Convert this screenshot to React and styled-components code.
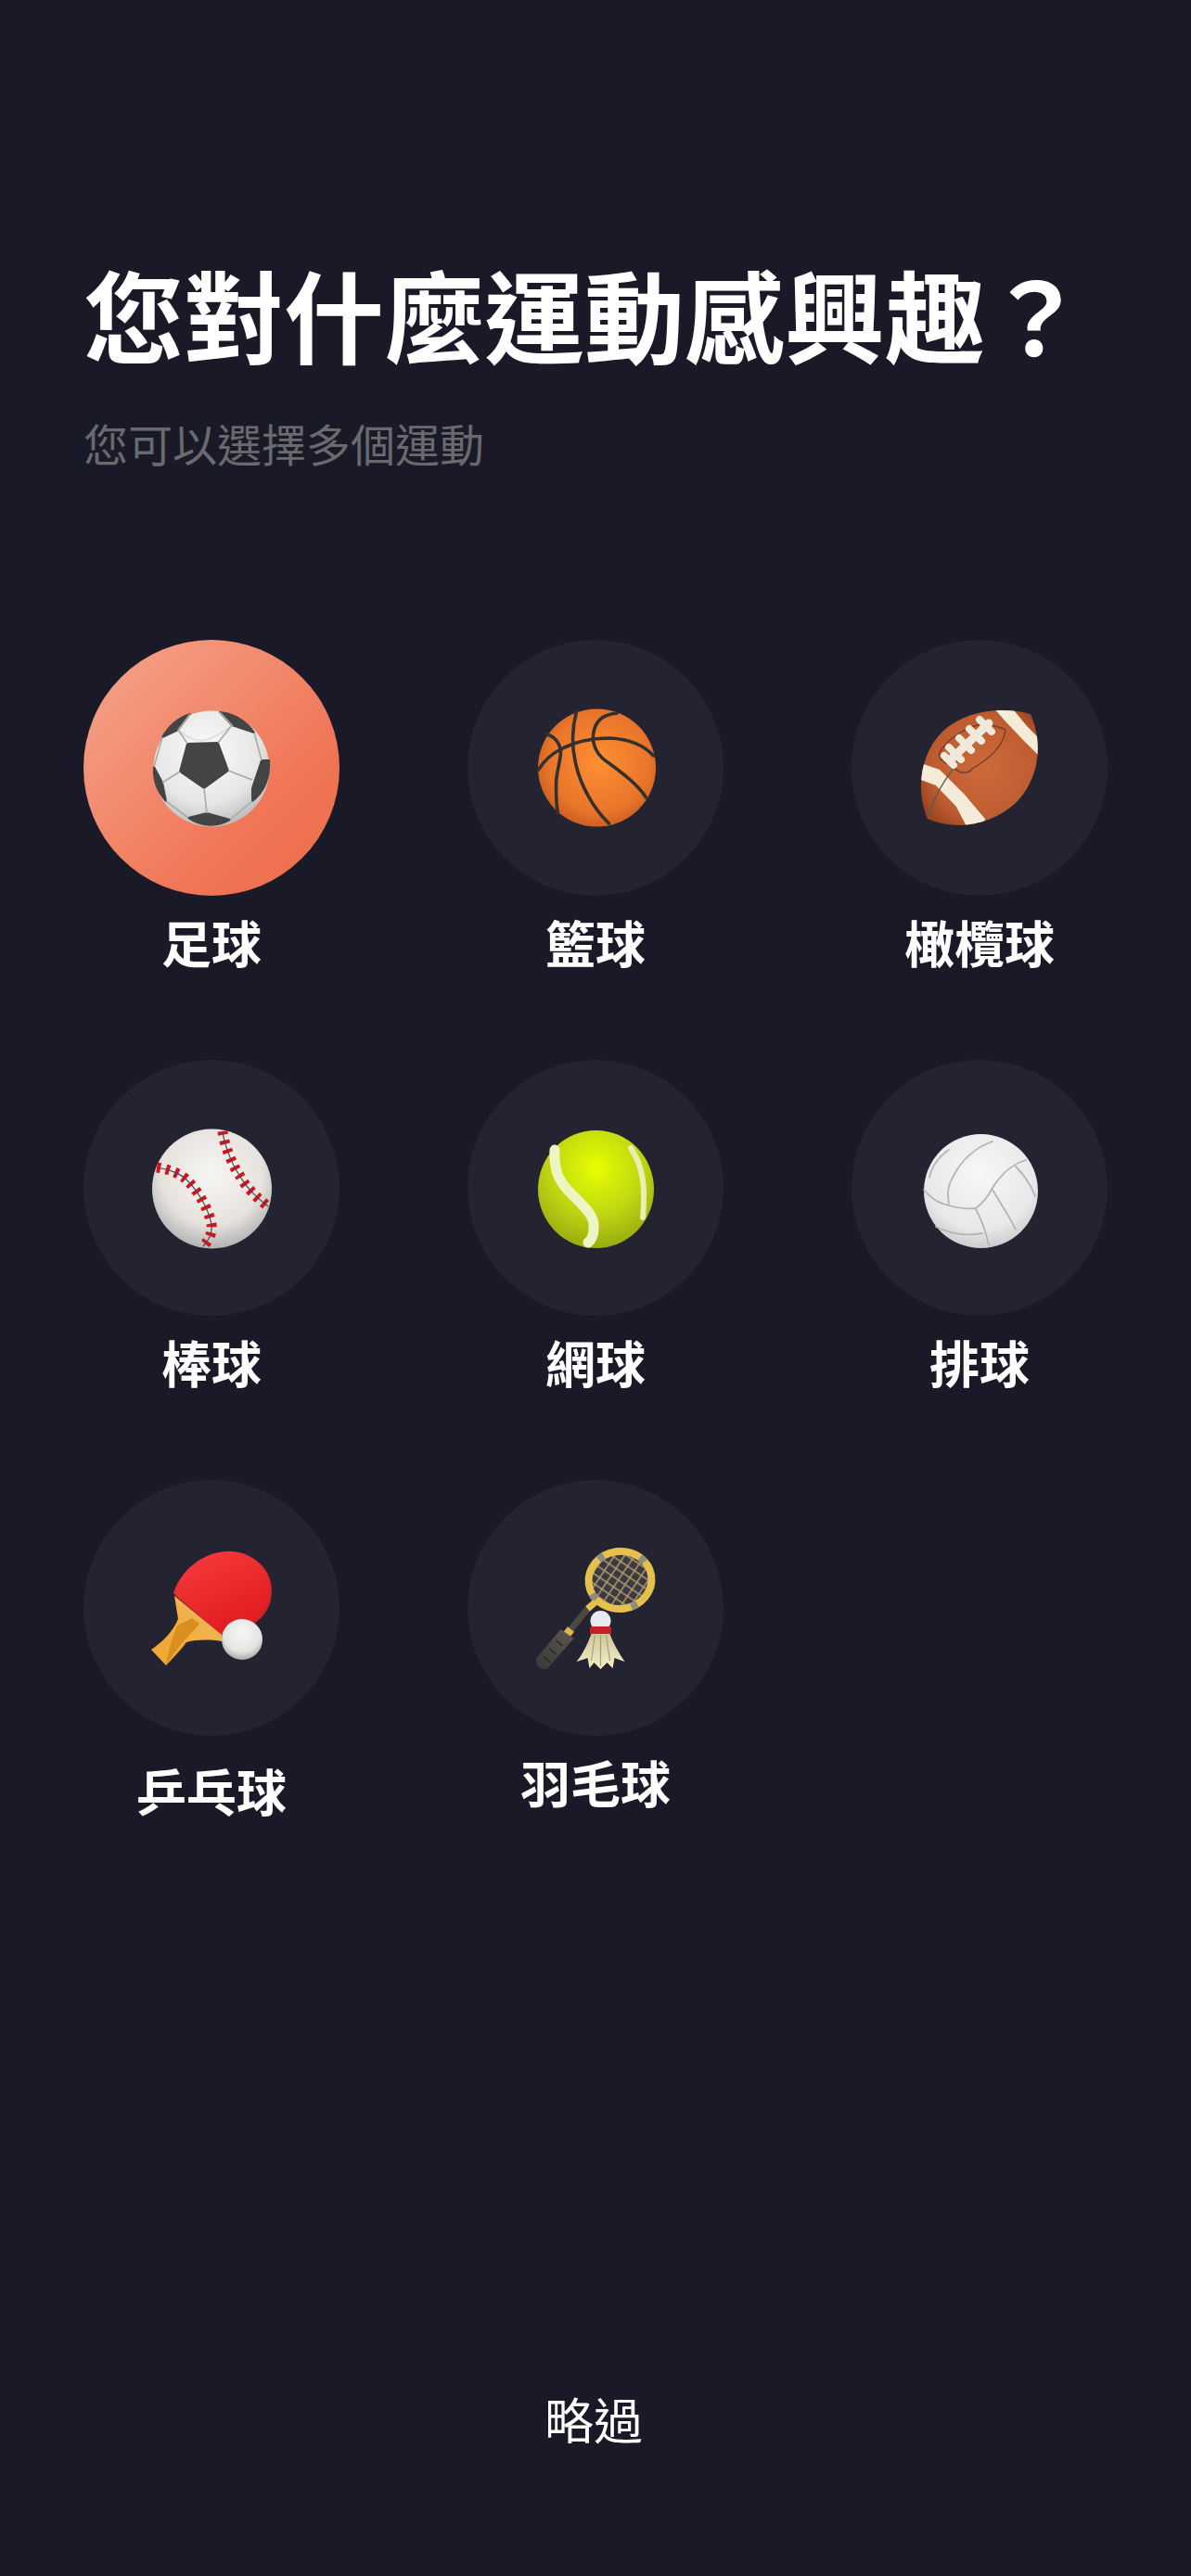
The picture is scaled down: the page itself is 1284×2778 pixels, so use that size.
import React from "react";
import styled, { createGlobalStyle } from "styled-components";

const Global = createGlobalStyle`
  html, body { margin: 0; padding: 0; background: #191928; }
`;

const Page = styled.main`
  box-sizing: border-box;
  width: 1284px;
  height: 2778px;
  padding: 275px 90px 0;
  display: flex;
  flex-direction: column;
  background: #191928;
  color: #fff;
  font-family: "Noto Sans CJK TC", "Noto Sans CJK SC", sans-serif;
`;

const Title = styled.h1`
  margin: 0;
  font-size: 108px;
  line-height: 124px;
  font-weight: 700;
  white-space: nowrap;
`;

const Subtitle = styled.p`
  margin: 45px 0 0;
  font-size: 48px;
  line-height: 66px;
  font-weight: 400;
  color: #69696e;
`;

const Grid = styled.section`
  margin-top: 180px;
  display: grid;
  grid-template-columns: repeat(3, 276px);
  grid-auto-rows: 453px;
  column-gap: 138px;
`;

const Item = styled.div`
  display: flex;
  flex-direction: column;
  align-items: center;
`;

const Circle = styled.div`
  width: 276px;
  height: 276px;
  flex: none;
  border-radius: 50%;
  display: flex;
  align-items: center;
  justify-content: center;
  background: ${(p) =>
    p.$selected ? "linear-gradient(135deg, #f5a58e 0%, #ef7555 70%, #ec6b4a 100%)" : "#232331"};
`;

const Label = styled.div`
  margin-top: ${(p) => p.$offset}px;
  font-size: 54px;
  line-height: 60px;
  font-weight: 700;
  color: #fff;
  white-space: nowrap;
`;

const Skip = styled.button`
  margin-top: auto;
  margin-bottom: 136px;
  margin-right: 4px;
  align-self: center;
  padding: 0;
  border: 0;
  background: none;
  color: #fff;
  font-family: inherit;
  font-size: 53px;
  line-height: 68px;
  font-weight: 400;
`;

const Art = styled.svg`
  width: 140px;
  height: 140px;
  flex: none;
  overflow: visible;
`;

const Soccer = () => (
  <Art viewBox="-7 -8 140 140">
    <defs>
      <radialGradient id="sb" cx="45%" cy="35%" r="70%">
        <stop offset="0" stopColor="#fbfbfb" />
        <stop offset=".65" stopColor="#e6e6e6" />
        <stop offset="1" stopColor="#b4b4b4" />
      </radialGradient>
    </defs>
    <circle cx="63" cy="63" r="62.5" fill="url(#sb)" />
    <g fill="#444" stroke="#444" strokeWidth="2" strokeLinejoin="round">
      <path d="M37 36 L70 35 L81 65 L55 84 L29 66Z" />
      <path d="M10 29 C17 17 28 8 40 4 L27 21Z" />
      <path d="M72 2 C85 3 101 11 109 24 L85 16Z" />
      <path d="M117 54 L125 54 C126 70 122 86 107 98 L107 84Z" />
      <path d="M38 116 L58 111 L83 118 C70 126 52 126 38 116Z" />
      <path d="M1 61 L10 78 L14 98 C5 88 0 75 1 61Z" />
    </g>
    <g stroke="#a9a9a9" strokeWidth="1.6" fill="none">
      <path d="M37 36 L27 21 L40 4" />
      <path d="M70 35 L85 16 L72 2" />
      <path d="M27 21 C45 38 60 36 85 16" opacity=".35" />
      <path d="M81 65 L107 75" />
      <path d="M55 84 L58 111" />
      <path d="M29 66 L10 78" />
      <path d="M109 24 L117 54" />
      <path d="M10 29 L1 61" />
      <path d="M14 98 L38 116" />
      <path d="M83 118 L107 98" />
    </g>
  </Art>
);

const Basketball = () => (
  <Art viewBox="-7.5 -6 140 140">
    <defs>
      <radialGradient id="bb" cx="52%" cy="45%" r="62%">
        <stop offset="0" stopColor="#ff8f33" />
        <stop offset=".7" stopColor="#e8742a" />
        <stop offset="1" stopColor="#bb561d" />
      </radialGradient>
    </defs>
    <circle cx="64" cy="64" r="63.5" fill="url(#bb)" />
    <g fill="none" stroke="#33302e" strokeWidth="3.6" strokeLinecap="round">
      <path d="M42 3 C37 22 37 42 41 59 C46 82 60 108 77 124" />
      <path d="M1 66 C8 55 15 49 25 44 C42 35 60 32 78 32 C98 33 115 40 125 51" />
      <path d="M86 5 C72 6 62 12 60 28 C59 42 66 52 77 59 C92 70 108 82 117 96" />
      <path d="M10 28 C18 30 24 37 25 46 C25 58 20 68 20 82 C20 94 20 104 22 113" />
    </g>
  </Art>
);

const ballOutline = "M8 118 C-4 90 -2 50 24 24 C50 0 90 -3 119 5 C132 35 130 72 104 100 C78 124 40 132 8 118Z";

const Football = () => (
  <Art viewBox="-6 -7 140 140">
    <defs>
      <radialGradient id="fb" cx="55%" cy="50%" r="62%">
        <stop offset="0" stopColor="#cd6a3b" />
        <stop offset=".75" stopColor="#bd5c30" />
        <stop offset="1" stopColor="#9c451f" />
      </radialGradient>
      <clipPath id="fc">
        <path d={ballOutline} />
      </clipPath>
    </defs>
    <path d={ballOutline} fill="url(#fb)" />
    <g clipPath="url(#fc)">
      <path d="M-2 57 L21 65 L48 92 L70 118 L68 130 L52 130 L39 105 L17 82 L-2 75Z" fill="#f4ecd8" />
      <path d="M77 -4 L97 -4 L115 18 L130 33 L130 52 L110 32 L92 13Z" fill="#f4ecd8" />
      <path d="M40 57 C32 70 16 88 9 116" fill="none" stroke="#5a5a55" strokeWidth="1.4" />
      <path d="M75 15 C55 15 30 30 20 48 C22 58 30 58 36 62 C42 70 52 70 56 64 C70 56 90 42 92 22 C86 18 80 20 75 15Z" fill="none" stroke="#6f3e28" strokeWidth="1.4" />
    </g>
    <g stroke="#efe9dc" strokeLinecap="round" fill="none">
      <path d="M74 15 L32 55" strokeWidth="9" />
      <path d="M64 11 L77 24 M53 21 L66 34 M42 31 L55 44 M31 41 L44 54 M26 50 L36 60" strokeWidth="8" />
    </g>
  </Art>
);

const Baseball = () => (
  <Art viewBox="-6 -6 140 140">
    <defs>
      <radialGradient id="bs" cx="50%" cy="38%" r="65%">
        <stop offset="0" stopColor="#f7f6f4" />
        <stop offset=".65" stopColor="#e6e2de" />
        <stop offset="1" stopColor="#a9adad" />
      </radialGradient>
    </defs>
    <circle cx="64.5" cy="65" r="64.5" fill="url(#bs)" />
    <g fill="none">
      <path d="M76 3 C78 20 88 42 94 50 C100 62 112 74 125 84" stroke="#d3141e" strokeWidth="11" strokeDasharray="4 6" />
      <path d="M5 42 C20 44 32 50 37 55 C48 66 60 84 64 103 C65 112 62 120 55 127" stroke="#d3141e" strokeWidth="11" strokeDasharray="4 6" />
      <path d="M76 3 C78 20 88 42 94 50 C100 62 112 74 125 84" stroke="#4a4a48" strokeWidth="1.2" />
      <path d="M5 42 C20 44 32 50 37 55 C48 66 60 84 64 103 C65 112 62 120 55 127" stroke="#4a4a48" strokeWidth="1.2" />
    </g>
  </Art>
);

const Tennis = () => (
  <Art viewBox="-8 -8 140 140">
    <defs>
      <radialGradient id="tb" cx="50%" cy="32%" r="72%">
        <stop offset="0" stopColor="#e6ff00" />
        <stop offset=".55" stopColor="#c0d612" />
        <stop offset="1" stopColor="#93a60f" />
      </radialGradient>
    </defs>
    <ellipse cx="62.5" cy="63.5" rx="62.5" ry="63.5" fill="url(#tb)" />
    <g fill="none" strokeLinecap="round">
      <path d="M18 21 C17 38 20 50 30 62 C44 78 62 90 60 105 C60 112 58 118 54 121" stroke="#eef5c4" strokeWidth="11" />
      <path d="M100 19 C110 34 114 52 114 68 C114 78 114 86 113 94" stroke="#e8efb0" strokeWidth="6" />
    </g>
  </Art>
);

const Volleyball = () => (
  <Art viewBox="-10 -12 140 140">
    <defs>
      <radialGradient id="vb" cx="50%" cy="35%" r="70%">
        <stop offset="0" stopColor="#f7f7f7" />
        <stop offset=".7" stopColor="#e8e8e8" />
        <stop offset="1" stopColor="#c4c4c4" />
      </radialGradient>
    </defs>
    <circle cx="61.5" cy="61.5" r="61.5" fill="url(#vb)" />
    <g fill="none" stroke="#b4b4b4" strokeWidth="1.8" strokeLinecap="round">
      <path d="M0 60 C8 70 16 75 27 77 C38 80 48 81 56 80 C64 74 70 66 74 58 C84 42 96 32 110 28" />
      <path d="M27 75 C25 62 26 55 31 47 C40 28 56 14 74 8" />
      <path d="M6 47 C8 36 16 24 27 17" />
      <path d="M56 81 C62 92 67 106 70 120" />
      <path d="M74 60 C82 74 92 88 99 103" />
      <path d="M99 35 C108 44 116 56 120 67" />
      <path d="M13 100 C30 108 48 110 63 107" />
    </g>
  </Art>
);

const PingPong = () => (
  <Art viewBox="-5 -9 140 140">
    <defs>
      <linearGradient id="pr" x1="0.2" y1="0" x2="0.7" y2="1">
        <stop offset="0" stopColor="#f43a3c" />
        <stop offset="1" stopColor="#e01a1e" />
      </linearGradient>
      <linearGradient id="pw" x1="0" y1="1" x2="1" y2="0">
        <stop offset="0" stopColor="#f2a52c" />
        <stop offset="1" stopColor="#f0b85c" />
      </linearGradient>
      <radialGradient id="pb" cx="50%" cy="35%" r="65%">
        <stop offset="0" stopColor="#f6f6f4" />
        <stop offset=".7" stopColor="#e4e4e2" />
        <stop offset="1" stopColor="#a8a8a6" />
      </radialGradient>
    </defs>
    <path d="M26 48 C34 20 56 1 84 1 C112 1 130 20 130 42 C130 62 120 72 108 80 L78 92Z" fill="#c9232a" />
    <path d="M24 45 C32 20 56 0 84 0 C110 0 128 20 128 40 C128 60 118 70 106 78 L76 90Z" fill="url(#pr)" />
    <path d="M25 48 L76 90 L76 97 C62 95 50 95 38 98 C32 106 24 115 16 123 L0 106 C12 98 24 86 29 73Z" fill="url(#pw)" />
    <path d="M28 80 L44 72 L52 78 C44 88 30 100 16 123 C18 108 22 94 28 80Z" fill="#d98f1e" />
    <circle cx="98" cy="95" r="22" fill="url(#pb)" />
  </Art>
);

const Badminton = () => (
  <Art viewBox="-3.5 -5 140 140">
    <defs>
      <linearGradient id="bh" x1="0" y1="1" x2="1" y2="0">
        <stop offset="0" stopColor="#3a3833" />
        <stop offset="1" stopColor="#5b5851" />
      </linearGradient>
      <linearGradient id="bf" x1="0" y1="0" x2="0" y2="1">
        <stop offset="0" stopColor="#cfc69d" />
        <stop offset="1" stopColor="#f6efc7" />
      </linearGradient>
      <pattern id="st" width="9" height="9" patternUnits="userSpaceOnUse" patternTransform="rotate(42)">
        <rect width="9" height="9" fill="#3a3945" />
        <path d="M0 0H9M0 0V9" stroke="#b39c63" strokeWidth="3" />
      </pattern>
    </defs>
    <path d="M58 66 L36 93" stroke="#4b4942" strokeWidth="7" />
    <path d="M40 88 L32 98" stroke="#dcb84e" strokeWidth="9" />
    <path d="M29 88 L43 98 L15 130 C9 134 0 127 3 119Z" fill="url(#bh)" />
    <path d="M24 100 L31 106 M17 109 L24 115 M11 118 L18 124" stroke="#27261f" strokeWidth="1.4" />
    <g transform="rotate(-8 93 35)">
      <ellipse cx="93" cy="35" rx="32" ry="29" fill="url(#st)" />
      <ellipse cx="93" cy="35" rx="34" ry="31" fill="none" stroke="#e6c04f" strokeWidth="8" />
      <ellipse cx="93" cy="35" rx="34" ry="31" fill="none" stroke="#8f8c80" strokeWidth="8" strokeDasharray="7 41" strokeDashoffset="12" />
    </g>
    <path d="M58 66 L66 59" stroke="#e6c04f" strokeWidth="7" />
    <path d="M62 93 C58 104 52 116 46 123 L58 119 L60 130 L65 124 L72 131 L79 124 L85 130 L87 119 L98 123 C92 114 86 104 82 93Z" fill="url(#bf)" />
    <path d="M66 94 L62 122 M72 94 V128 M78 94 L82 122" stroke="#a9a078" strokeWidth="1.2" />
    <circle cx="72" cy="79" r="11" fill="#e8e9ee" />
    <rect x="60.5" y="85" width="23" height="8" rx="1.5" fill="#c91f24" />
  </Art>
);

const sports = [
  { name: "足球", Icon: Soccer, selected: true, offset: 20 },
  { name: "籃球", Icon: Basketball, offset: 20 },
  { name: "橄欖球", Icon: Football, offset: 20 },
  { name: "棒球", Icon: Baseball, offset: 20 },
  { name: "網球", Icon: Tennis, offset: 20 },
  { name: "排球", Icon: Volleyball, offset: 20 },
  { name: "乒乓球", Icon: PingPong, offset: 29 },
  { name: "羽毛球", Icon: Badminton, offset: 20 },
];

export default function App() {
  return (
    <Page>
      <Global />
      <Title>您對什麼運動感興趣？</Title>
      <Subtitle>您可以選擇多個運動</Subtitle>
      <Grid>
        {sports.map(({ name, Icon, selected, offset }) => (
          <Item key={name}>
            <Circle $selected={selected}>
              <Icon />
            </Circle>
            <Label $offset={offset}>{name}</Label>
          </Item>
        ))}
      </Grid>
      <Skip type="button">略過</Skip>
    </Page>
  );
}
